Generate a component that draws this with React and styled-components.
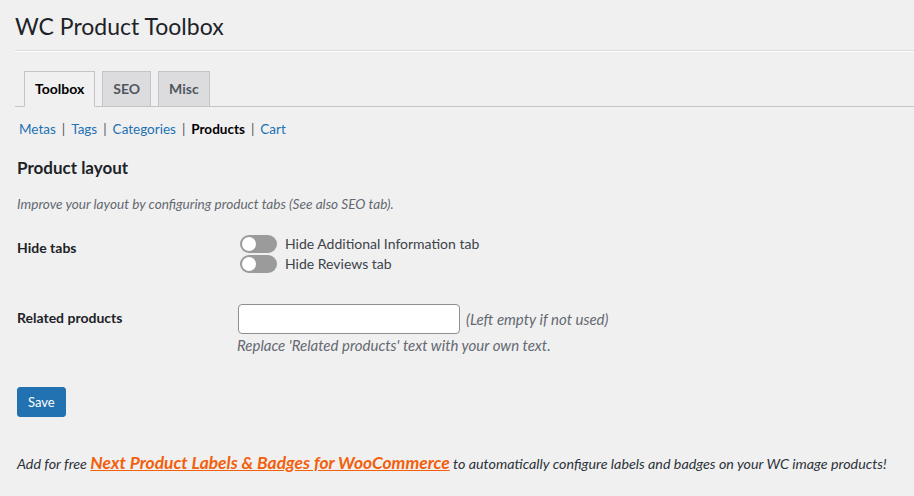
import React, { useState } from "react";
import styled, { createGlobalStyle } from "styled-components";

const GlobalStyle = createGlobalStyle`
  html, body {
    margin: 0;
    padding: 0;
    background: #f0f0f1;
  }
  body {
    color: #3c434a;
    font-family: Lato, "Noto Sans", sans-serif;
    font-size: 13px;
    line-height: 1.4;
  }
`;

const Wrap = styled.div`
  padding: 11px 0 0 15px;
`;

const Header = styled.div`
  border-bottom: 1px solid #dcdcde;
  box-shadow: 0 1px 0 #fff;
  padding-bottom: 9px;
`;

const Title = styled.h1`
  margin: 0;
  font-size: 23px;
  font-weight: 400;
  line-height: 30px;
  color: #1d2327;
`;

const TabBar = styled.nav`
  display: flex;
  gap: 7px;
  margin-top: 20px;
  padding-left: 9px;
  border-bottom: 1px solid #c3c4c7;
`;

const Tab = styled.a`
  display: block;
  margin-bottom: -1px;
  padding: 5px 10px;
  font-size: 14px;
  font-weight: 700;
  line-height: 24px;
  text-decoration: none;
  border: 1px solid #c3c4c7;
  background: ${(p) => (p.$active ? "#f0f0f1" : "#dcdcde")};
  border-bottom-color: ${(p) => (p.$active ? "#f0f0f1" : "#c3c4c7")};
  color: ${(p) => (p.$active ? "#000" : "#50575e")};
  cursor: pointer;
`;

const Content = styled.div`
  padding-left: 2px;
`;

const SubNav = styled.ul`
  display: flex;
  margin: 9px 0 0 2px;
  padding: 0;
  list-style: none;
  font-size: 13.5px;
  line-height: 26px;
  color: #646970;
`;

const SubLink = styled.a`
  color: ${(p) => (p.$current ? "#000" : "#2271b1")};
  font-weight: ${(p) => (p.$current ? 700 : 400)};
  text-decoration: none;
`;

const Sep = styled.span`
  padding: 0 6px;
  color: #50575e;
`;

const SectionTitle = styled.h2`
  margin: 14px 0 0;
  font-size: 17px;
  font-weight: 700;
  line-height: 24px;
  color: #1d2327;
`;

const Intro = styled.p`
  margin: 14px 0 0;
  font-size: 13.6px;
  font-style: italic;
  line-height: 20px;
  color: #646970;
`;

const FormGrid = styled.div`
  display: grid;
  grid-template-columns: 221px 1fr;
  margin-top: 6px;
`;

const Label = styled.div`
  padding-top: ${(p) => p.$top}px;
  font-size: 14px;
  font-weight: 700;
  line-height: 18px;
  color: #1d2327;
`;

const Field = styled.div`
  padding: ${(p) => p.$top || 15}px 0 15px;
`;

const ToggleList = styled.div`
  display: flex;
  flex-direction: column;
  gap: 2px;
  padding-left: 2px;
`;

const ToggleRow = styled.label`
  display: flex;
  align-items: center;
  gap: 8px;
  font-size: 14px;
  line-height: 18px;
  color: #3c434a;
  cursor: pointer;
`;

const Switch = styled.span`
  position: relative;
  flex: none;
  width: 37px;
  height: 18px;
  border-radius: 9px;
  background: ${(p) => (p.$on ? "#2271b1" : "#9b9b9b")};
`;

const Knob = styled.span`
  position: absolute;
  top: 2px;
  left: ${(p) => (p.$on ? "21px" : "2px")};
  width: 14px;
  height: 14px;
  border-radius: 50%;
  background: #fff;
`;

const InputLine = styled.div`
  display: flex;
  align-items: center;
  gap: 6px;
`;

const TextInput = styled.input`
  box-sizing: border-box;
  width: 222px;
  height: 30px;
  padding: 0 8px;
  border: 1px solid #8c8f94;
  border-radius: 4px;
  background: #fff;
  font: inherit;
  font-size: 14px;
  color: #2c3338;
`;

const Hint = styled.span`
  font-size: 15px;
  font-style: italic;
  color: #646970;
`;

const Desc = styled.p`
  margin: 1px 0 0 -1px;
  font-size: 15px;
  font-style: italic;
  line-height: 20px;
  color: #646970;
`;

const SaveButton = styled.button`
  display: block;
  margin-top: 17px;
  height: 30px;
  padding: 0 10px;
  border: 1px solid #2271b1;
  border-radius: 3px;
  background: #2271b1;
  color: #fff;
  font: inherit;
  font-size: 13px;
  cursor: pointer;
`;

const Promo = styled.p`
  margin: 35px 0 0;
  font-size: 14.3px;
  font-style: italic;
  line-height: 22px;
  color: #2c3338;
  white-space: nowrap;
`;

const PromoLink = styled.a`
  font-size: 17.4px;
  font-weight: 700;
  color: #f2600c;
  text-decoration: underline;
`;

const subItems = ["Metas", "Tags", "Categories", "Products", "Cart"];

const Toggle = ({ label }) => {
  const [on, setOn] = useState(false);
  return (
    <ToggleRow onClick={() => setOn(!on)}>
      <Switch $on={on}>
        <Knob $on={on} />
      </Switch>
      {label}
    </ToggleRow>
  );
};

export default function App() {
  return (
    <>
      <GlobalStyle />
      <Wrap>
        <Header>
          <Title>WC Product Toolbox</Title>
        </Header>
        <TabBar>
          <Tab $active>Toolbox</Tab>
          <Tab>SEO</Tab>
          <Tab>Misc</Tab>
        </TabBar>
        <Content>
          <SubNav>
            {subItems.map((item, i) => (
              <li key={item}>
                <SubLink $current={item === "Products"}>{item}</SubLink>
                {i < subItems.length - 1 && <Sep>|</Sep>}
              </li>
            ))}
          </SubNav>
          <SectionTitle>Product layout</SectionTitle>
          <Intro>Improve your layout by configuring product tabs (See also SEO tab).</Intro>
          <FormGrid>
            <Label $top={19}>Hide tabs</Label>
            <Field>
              <ToggleList>
                <Toggle label="Hide Additional Information tab" />
                <Toggle label="Hide Reviews tab" />
              </ToggleList>
            </Field>
            <Label $top={21}>Related products</Label>
            <Field $top={16}>
              <InputLine>
                <TextInput type="text" />
                <Hint>(Left empty if not used)</Hint>
              </InputLine>
              <Desc>Replace 'Related products' text with your own text.</Desc>
            </Field>
          </FormGrid>
          <SaveButton>Save</SaveButton>
          <Promo>
            Add for free <PromoLink>Next Product Labels &amp; Badges for WooCommerce</PromoLink> to
            automatically configure labels and badges on your WC image products!
          </Promo>
        </Content>
      </Wrap>
    </>
  );
}
